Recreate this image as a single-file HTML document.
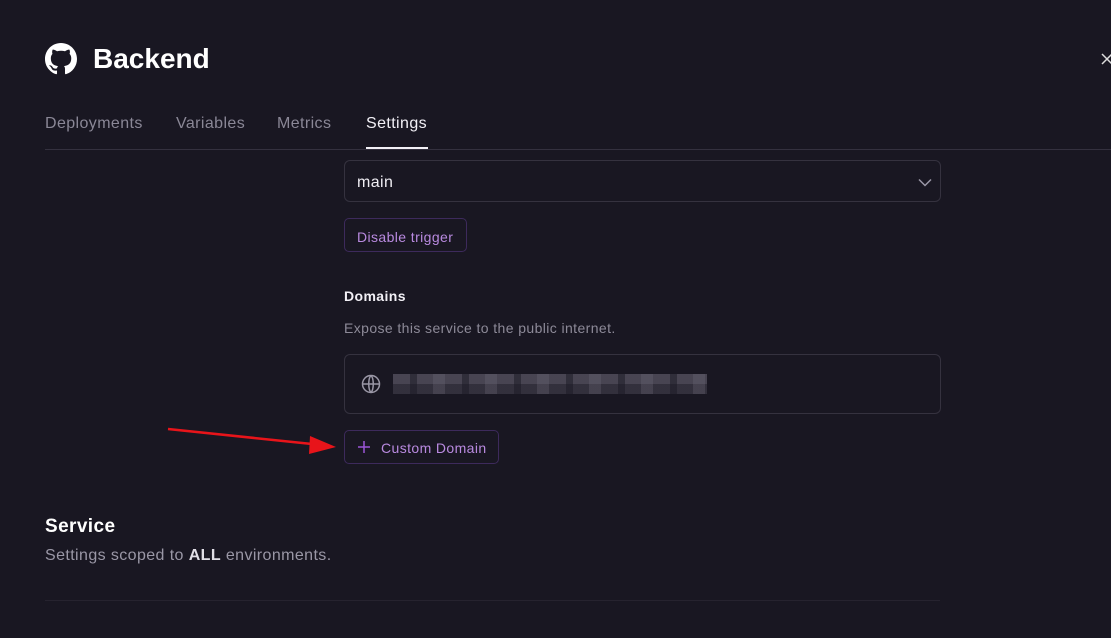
<!DOCTYPE html>
<html><head><meta charset="utf-8"><style>
*{box-sizing:border-box;margin:0;padding:0}
body{width:1111px;height:638px;overflow:hidden;background:#191722;font-family:"Liberation Sans",sans-serif;color:#e8e6ee;position:relative}
.abs{position:absolute}
.t{letter-spacing:0.4px}
</style></head><body>
<svg class="abs" style="left:45px;top:43px" width="32" height="32" viewBox="0 0 16 16"><path fill="#fff" d="M8 0C3.58 0 0 3.58 0 8c0 3.54 2.29 6.53 5.47 7.59.4.07.55-.17.55-.38 0-.19-.01-.82-.01-1.49-2.010.37-2.53-.49-2.69-.94-.09-.23-.48-.94-.82-1.13-.28-.15-.68-.52-.01-.53.63-.01 1.08.58 1.23.82.72 1.21 1.870.87 2.33.66.07-.52.28-.87.51-1.07-1.78-.2-3.64-.89-3.64-3.95 0-.87.31-1.59.82-2.15-.08-.2-.36-1.02.08-2.12 0 0 .67-.21 2.2.82.64-.18 1.32-.27 2-.27.68 0 1.36.09 2 .27 1.53-1.04 2.2-.82 2.2-.82.44 1.1.16 1.92.08 2.12.51.56.82 1.27.82 2.15 0 3.07-1.87 3.75-3.65 3.95.29.25.54.73.54 1.48 0 1.07-.01 1.93-.01 2.2 0 .21.15.46.55.38A8.013 8.013 0 0016 8c0-4.42-3.58-8-8-8z"/></svg>
<div class="abs" style="left:93px;top:43px;font-size:28px;font-weight:bold;color:#fff">Backend</div>
<svg class="abs" style="left:1101px;top:53px" width="12" height="12"><path d="M1 1L11 11M11 1L1 11" stroke="#ddd" stroke-width="1.5"/></svg>
<div class="abs t" style="left:45px;top:115px;font-size:16px;color:#8a8796">Deployments</div>
<div class="abs t" style="left:176px;top:115px;font-size:16px;color:#8a8796">Variables</div>
<div class="abs t" style="left:277px;top:115px;font-size:16px;color:#8a8796">Metrics</div>
<div class="abs t" style="left:366px;top:115px;font-size:16px;color:#f2f0f6">Settings</div>
<div class="abs" style="left:45px;top:149px;width:1066px;height:1px;background:#34313f"></div>
<div class="abs" style="left:366px;top:147px;width:62px;height:2px;background:#f2f0f6"></div>

<div class="abs" style="left:344px;top:160px;width:597px;height:42px;border:1px solid #35323f;border-radius:6px"></div>
<div class="abs t" style="left:357px;top:174px;font-size:16px;color:#f0eef4">main</div>
<svg class="abs" style="left:918px;top:178px" width="14" height="9"><path d="M1 1.5L7 7.5L13 1.5" stroke="#9a97a6" stroke-width="1.5" fill="none"/></svg>

<div class="abs t" style="left:344px;top:218px;width:123px;height:34px;border:1px solid #3d2a5c;border-radius:5px;font-size:14px;color:#b98ae0;padding:10px 0 0 12px">Disable trigger</div>

<div class="abs t" style="left:344px;top:288px;font-size:14px;font-weight:bold;color:#f2f0f6">Domains</div>
<div class="abs t" style="left:344px;top:320px;font-size:14px;color:#8d8a98">Expose this service to the public internet.</div>

<div class="abs" style="left:344px;top:354px;width:597px;height:60px;border:1px solid #35323f;border-radius:6px"></div>
<svg class="abs" style="left:361px;top:374px" width="20" height="20" viewBox="0 0 20 20" fill="none" stroke="#9a97a6" stroke-width="1.5"><circle cx="10" cy="10" r="8.5"/><path d="M1.5 10h17M10 1.5c-3 3-3 14 0 17M10 1.5c3 3 3 14 0 17"/></svg>
<div class="abs" style="left:393px;top:374px;width:314px;height:20px;background:linear-gradient(#4a4755 0,#4a4755 50%,#34313e 50%);opacity:.95"></div>
<div class="abs" style="left:393px;top:374px;width:314px;height:20px;background:repeating-linear-gradient(90deg,transparent 0 17px,rgba(25,23,34,.5) 17px 24px,transparent 24px 40px,rgba(110,106,120,.3) 40px 52px)"></div>

<div class="abs" style="left:344px;top:430px;width:155px;height:34px;border:1px solid #3d2a5c;border-radius:5px"></div>
<svg class="abs" style="left:358px;top:441px" width="12" height="12"><path d="M6 0v12M0 6h12" stroke="#9a55d6" stroke-width="1.5"/></svg>
<div class="abs t" style="left:381px;top:440px;font-size:14px;color:#b98ae0">Custom Domain</div>

<svg class="abs" style="left:160px;top:420px" width="180" height="40"><path d="M8 9L152 24" stroke="#e8141a" stroke-width="2.5"/><path d="M176 27L150 16L149 34Z" fill="#e8141a"/></svg>

<div class="abs t" style="left:45px;top:516px;font-size:19px;font-weight:bold;color:#fff">Service</div>
<div class="abs t" style="left:45px;top:547px;font-size:16px;color:#9a97a6">Settings scoped to <b style="color:#e0dee6">ALL</b> environments.</div>
<div class="abs" style="left:45px;top:600px;width:895px;height:1px;background:#26232f"></div>
</body></html>
